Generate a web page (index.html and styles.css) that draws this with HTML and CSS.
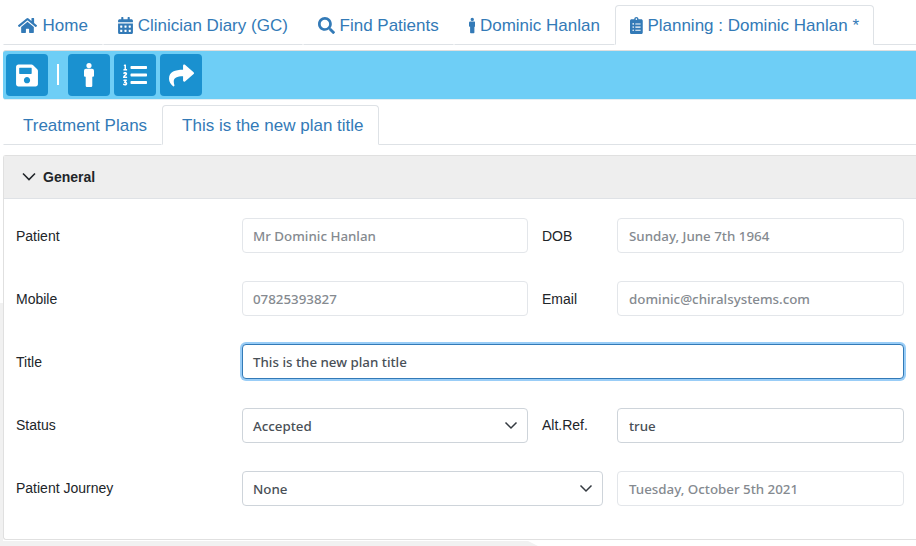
FILE: index.html
```html
<!DOCTYPE html>
<html lang="en">
<head>
<meta charset="utf-8">
<title>Planning</title>
<link rel="stylesheet" href="styles.css">
</head>
<body>
<div class="backdrop"></div>
<nav class="tabs top-tabs">
  <a class="tab"><svg class="ico ico-home" viewBox="0 0 576 512"><path d="M280.4 148.3L96 300.1V464a16 16 0 0 0 16 16l112-.3a16 16 0 0 0 16-16V368a16 16 0 0 1 16-16h64a16 16 0 0 1 16 16v95.6a16 16 0 0 0 16 16l112 .4a16 16 0 0 0 16-16V300L295.7 148.3a12.200 12.200 0 0 0-15.300 0zM571.600 251.500L488 182.600V44a12 12 0 0 0-12-12h-56a12 12 0 0 0-12 12v72.600L318.500 43a48 48 0 0 0-61 0L4.300 251.500a12 12 0 0 0-1.600 16.900l25.500 31A12 12 0 0 0 45.200 301l235.200-193.700a12.200 12.200 0 0 1 15.300 0L530.900 301a12 12 0 0 0 16.900-1.600l25.500-31a12 12 0 0 0-1.700-16.900z"/></svg>Home</a>
  <a class="tab"><svg class="ico ico-cal" viewBox="0 0 448 512"><path d="M0 464c0 26.500 21.500 48 48 48h352c26.500 0 48-21.500 48-48V192H0v272zm320-196c0-6.600 5.400-12 12-12h40c6.600 0 12 5.400 12 12v40c0 6.600-5.400 12-12 12h-40c-6.600 0-12-5.400-12-12v-40zm0 128c0-6.600 5.400-12 12-12h40c6.600 0 12 5.400 12 12v40c0 6.600-5.400 12-12 12h-40c-6.600 0-12-5.400-12-12v-40zM192 268c0-6.600 5.400-12 12-12h40c6.600 0 12 5.400 12 12v40c0 6.600-5.400 12-12 12h-40c-6.600 0-12-5.400-12-12v-40zm0 128c0-6.600 5.400-12 12-12h40c6.600 0 12 5.400 12 12v40c0 6.600-5.400 12-12 12h-40c-6.600 0-12-5.400-12-12v-40zM64 268c0-6.600 5.400-12 12-12h40c6.600 0 12 5.400 12 12v40c0 6.600-5.400 12-12 12H76c-6.600 0-12-5.400-12-12v-40zm0 128c0-6.600 5.400-12 12-12h40c6.600 0 12 5.400 12 12v40c0 6.600-5.400 12-12 12H76c-6.600 0-12-5.400-12-12v-40zM400 64h-48V16c0-8.800-7.200-16-16-16h-32c-8.800 0-16 7.200-16 16v48H160V16c0-8.800-7.200-16-16-16h-32c-8.800 0-16 7.200-16 16v48H48C21.500 64 0 85.500 0 112v48h448v-48c0-26.500-21.500-48-48-48z"/></svg>Clinician Diary (GC)</a>
  <a class="tab"><svg class="ico ico-search" viewBox="0 0 512 512"><path d="M505 442.700L405.300 343c-4.500-4.500-10.600-7-17-7H372c27.600-35.300 44-79.700 44-128C416 93.100 322.900 0 208 0S0 93.100 0 208s93.100 208 208 208c48.300 0 92.700-16.400 128-44v16.300c0 6.400 2.500 12.500 7 17l99.700 99.700c9.400 9.400 24.600 9.400 33.900 0l28.300-28.300c9.400-9.400 9.400-24.600.1-34zM208 336c-70.700 0-128-57.200-128-128 0-70.700 57.200-128 128-128 70.700 0 128 57.200 128 128 0 70.700-57.200 128-128 128z"/></svg>Find Patients</a>
  <a class="tab"><svg class="ico ico-person" viewBox="0 0 200 480"><path d="M100 0a52 52 0 1 1 0 104a52 52 0 0 1 0-104zM40 116h120a40 40 0 0 1 40 40v100a20 20 0 0 1-20 20h-14v180a24 24 0 0 1-24 24H58a24 24 0 0 1-24-24V276H20a20 20 0 0 1-20-20V156a40 40 0 0 1 40-40z"/></svg>Dominic Hanlan</a>
  <a class="tab active"><svg class="ico ico-clip" viewBox="0 0 384 512"><path d="M336 64h-80c0-35.300-28.700-64-64-64s-64 28.700-64 64H48C21.500 64 0 85.500 0 112v352c0 26.500 21.500 48 48 48h288c26.500 0 48-21.500 48-48V112c0-26.500-21.500-48-48-48zM96 424c-13.300 0-24-10.700-24-24s10.700-24 24-24 24 10.700 24 24-10.700 24-24 24zm0-96c-13.300 0-24-10.700-24-24s10.700-24 24-24 24 10.700 24 24-10.700 24-24 24zm0-96c-13.300 0-24-10.700-24-24s10.700-24 24-24 24 10.700 24 24-10.700 24-24 24zm96-192c13.300 0 24 10.700 24 24s-10.700 24-24 24-24-10.700-24-24 10.700-24 24-24zm128 368c0 4.400-3.600 8-8 8H168c-4.400 0-8-3.600-8-8v-16c0-4.400 3.600-8 8-8h144c4.400 0 8 3.600 8 8v16zm0-96c0 4.400-3.600 8-8 8H168c-4.400 0-8-3.600-8-8v-16c0-4.400 3.600-8 8-8h144c4.400 0 8 3.600 8 8v16zm0-96c0 4.400-3.600 8-8 8H168c-4.400 0-8-3.600-8-8v-16c0-4.400 3.600-8 8-8h144c4.400 0 8 3.600 8 8v16z"/></svg>Planning : Dominic Hanlan *</a>
  <div class="tab-fill"></div>
</nav>
<div class="toolbar">
  <button class="tool" aria-label="Save"><svg class="tool-ico save" viewBox="0 0 448 512"><path d="M433.941 129.941l-83.882-83.882A48 48 0 0 0 316.118 32H48C21.490 32 0 53.490 0 80v352c0 26.510 21.490 48 48 48h352c26.510 0 48-21.490 48-48V163.882a48 48 0 0 0-14.059-33.941zM224 416c-35.346 0-64-28.654-64-64 0-35.346 28.654-64 64-64s64 28.654 64 64c0 35.346-28.654 64-64 64zm96-304.520V212c0 6.627-5.373 12-12 12H76c-6.627 0-12-5.373-12-12V108c0-6.627 5.373-12 12-12h228.520c3.183 0 6.235 1.264 8.485 3.515l3.480 3.480A11.996 11.996 0 0 1 320 111.480z"/></svg></button>
  <span class="sep"></span>
  <button class="tool" aria-label="Patient"><svg class="tool-ico person" viewBox="0 0 200 480"><path d="M100 0a52 52 0 1 1 0 104a52 52 0 0 1 0-104zM40 116h120a40 40 0 0 1 40 40v100a20 20 0 0 1-20 20h-14v180a24 24 0 0 1-24 24H58a24 24 0 0 1-24-24V276H20a20 20 0 0 1-20-20V156a40 40 0 0 1 40-40z"/></svg></button>
  <button class="tool" aria-label="List"><svg class="tool-ico list" viewBox="0 0 512 512"><path d="M61.770 401l17.500-20.150a19.920 19.920 0 0 0 5.070-14.190v-3.310C84.340 356 80.500 352 73 352H16a8 8 0 0 0-8 8v16a8 8 0 0 0 8 8h22.830a157.410 157.410 0 0 0-11 12.310l-5.610 7c-4 5.070-5.250 10.130-2.800 14.880l1.050 1.930c3 5.760 6.290 7.880 12.250 7.880h4.730c10.330 0 15.940 2.440 15.940 9.090 0 4.720-4.200 8.220-14.360 8.220a41.540 41.540 0 0 1-15.470-3.120c-6.490-3.880-11.740-3.500-15.600 3.120l-5.590 9.310c-3.720 6.130-3.190 11.720 2.630 15.940 7.710 4.690 20.380 9.440 37 9.440 34.160 0 48.500-22.750 48.500-44.120-.03-14.380-9.120-29.760-28.730-34.880zM496 224H176a16 16 0 0 0-16 16v32a16 16 0 0 0 16 16h320a16 16 0 0 0 16-16v-32a16 16 0 0 0-16-16zm0-160H176a16 16 0 0 0-16 16v32a16 16 0 0 0 16 16h320a16 16 0 0 0 16-16V80a16 16 0 0 0-16-16zm0 320H176a16 16 0 0 0-16 16v32a16 16 0 0 0 16 16h320a16 16 0 0 0 16-16v-32a16 16 0 0 0-16-16zM16 160h64a8 8 0 0 0 8-8v-16a8 8 0 0 0-8-8H64V40a8 8 0 0 0-8-8H32a8 8 0 0 0-7.140 4.420l-8 16A8 8 0 0 0 24 64h8v64H16a8 8 0 0 0-8 8v16a8 8 0 0 0 8 8zm-3.910 160H80a8 8 0 0 0 8-8v-16a8 8 0 0 0-8-8H41.320c3.290-10.290 48.340-18.680 48.340-56.440 0-29.060-25-39.560-44.470-39.560-21.360 0-33.800 10-40.460 18.750-4.370 5.590-3 10.840 2.800 15.370l8.580 6.880c5.610 4.560 11 2.470 16.120-2.440a13.440 13.440 0 0 1 9.460-3.840c3.330 0 9.280 1.560 9.280 8.750C51 248.190 0 257.310 0 304.590v4C0 316 5.080 320 12.090 320z"/></svg></button>
  <button class="tool" aria-label="Share"><svg class="tool-ico share" viewBox="0 0 512 512"><path d="M503.700 189.800L327.700 37.900C312.300 24.500 288 35.300 288 56v80.100C127.400 137.900 0 170.100 0 322.300c0 61.400 39.600 122.300 83.300 154.100 13.700 9.900 33.100-2.500 28.100-18.600C66 312.300 132.900 273.800 288 271.600V360c0 20.700 24.300 31.500 39.700 18.200l176-152c11.100-9.600 11.100-26.800 0-36.400z"/></svg></button>
</div>
<nav class="tabs sub-tabs">
  <a class="tab">Treatment Plans</a>
  <a class="tab active">This is the new plan title</a>
  <div class="tab-fill"></div>
</nav>
<section class="panel">
  <header class="panel-head"><svg class="chev-head" viewBox="0 0 14 10"><path d="M1 1.500l6 6 6-6"/></svg>General</header>
  <div class="form">
    <div class="row">
      <label class="lbl">Patient</label>
      <div class="field half ro">Mr Dominic Hanlan</div>
      <label class="lbl2">DOB</label>
      <div class="field grow ro">Sunday, June 7th 1964</div>
    </div>
    <div class="row">
      <label class="lbl">Mobile</label>
      <div class="field half ro">07825393827</div>
      <label class="lbl2">Email</label>
      <div class="field grow ro">dominic@chiralsystems.com</div>
    </div>
    <div class="row">
      <label class="lbl">Title</label>
      <div class="field grow focus">This is the new plan title</div>
    </div>
    <div class="row row-status row-low">
      <label class="lbl">Status</label>
      <div class="field half sel">Accepted<svg class="chev" viewBox="0 0 14 9"><path d="M1.500 1.500l5.500 5.500 5.500-5.500"/></svg></div>
      <label class="lbl2">Alt.Ref.</label>
      <div class="field grow">true</div>
    </div>
    <div class="row row-low">
      <label class="lbl">Patient Journey</label>
      <div class="field wide sel">None<svg class="chev" viewBox="0 0 14 9"><path d="M1.500 1.500l5.500 5.500 5.500-5.500"/></svg></div>
      <div class="field grow ro">Tuesday, October 5th 2021</div>
    </div>
  </div>
</section>
</body>
</html>
```
FILE: styles.css
```css
* { box-sizing: border-box; }
html, body { margin: 0; height: 546px; overflow: hidden; background: #fff; }
body { width: 916px; padding: 0 0 0 3px; font-family: "Liberation Sans", Arial, sans-serif; position: relative; color: #212529; }
.backdrop { position: absolute; left: 0; top: 303px; width: 538px; height: 243px; background: #f1f1f1; clip-path: polygon(0 0, 3px 0, 3px 238px, 528px 238px, 538px 243px, 0 243px); }
.tabs { display: flex; align-items: flex-end; position: relative; }
.top-tabs { height: 45px; padding-top: 5px; }
.tab { display: flex; align-items: center; height: 40px; padding: 2px 14px 0; font-size: 17px; color: #337ab7; border: 1px solid transparent; border-bottom: 1px solid #dee2e6; border-radius: 4px 4px 0 0; white-space: nowrap; }
.tab.active { border-color: #dee2e6; border-bottom-color: #fff; }
.tab-fill { flex: 1; border-bottom: 1px solid #dee2e6; height: 1px; }
.ico { width: 19px; height: 17px; fill: #337ab7; margin: -2px 4.700px 0 0; }
.ico-home { margin-right: 5.600px; }
.ico-cal { width: 15px; }
.ico-search { width: 17px; }
.ico-person { width: 6.500px; }
.ico-clip { width: 12.750px; }
.toolbar { display: flex; align-items: flex-start; height: 50px; margin-top: 5px; padding: 3px; background: #6ecef6; border-top: 1px solid #dfdfdf; border-bottom: 1px solid #e4eef2; border-radius: 3px 0 0 3px; gap: 4px; }
.tool { display: flex; align-items: center; justify-content: center; width: 42px; height: 42px; padding: 0; border: 0; border-radius: 4px; background: #1a91d0; }
.tool-ico { fill: #fff; }
.save { width: 22px; height: 25px; }
.person { width: 10px; height: 24px; }
.list { width: 24px; height: 24px; }
.share { width: 25px; height: 25px; }
.sep { width: 2px; height: 21px; background: #fff; margin: 10px 5px 0; }
.sub-tabs { height: 45px; }
.sub-tabs .tab:first-child { padding: 2px 14px 0 19px; }
.sub-tabs .tab.active { padding: 2px 14px 0 19px; }
.panel { margin-top: 10px; height: 385px; border: 1px solid #e0e0e0; border-right: 0; border-radius: 3px 0 0 3px; background: #fff; }
.panel-head { display: flex; align-items: center; height: 43px; padding-left: 18px; background: #eee; border-bottom: 1px solid #dfe2e6; font-size: 14px; font-weight: 700; color: #212529; }
.chev-head { width: 14px; height: 10px; margin-right: 7px; fill: none; stroke: #212529; stroke-width: 1.600; }
.form { display: flex; flex-direction: column; gap: 28px; padding: 19px 12px 0 12px; }
.row { display: flex; align-items: center; height: 35px; }
.row-status { margin-top: 1px; }
.lbl { width: 226px; flex: none; font-size: 14px; }
.lbl2 { width: 89px; flex: none; padding-left: 14px; font-size: 14px; }
.row-low .lbl, .row-low .lbl2 { margin-top: -2px; }
.field { display: flex; align-items: center; height: 35px; padding: 1px 10px 0; border: 1px solid #ced4da; border-radius: 4px; background: #fff; font-family: "Noto Sans", sans-serif; font-size: 13.330px; font-weight: 500; color: #495057; position: relative; }
.half { width: 286px; flex: none; }
.wide { width: 361px; flex: none; margin-right: 14px; }
.grow { flex: 1; padding-left: 11px; }
.half, .wide, .focus { padding-left: 10px; }
.ro { border-color: #e3e6ea; color: #858a90; }
.focus { border-color: #337ab7; box-shadow: 0 0 0 2px #99cdf7; }
.chev { position: absolute; right: 9px; top: 12px; width: 14px; height: 9px; fill: none; stroke: #343a40; stroke-width: 1.500; }
```
